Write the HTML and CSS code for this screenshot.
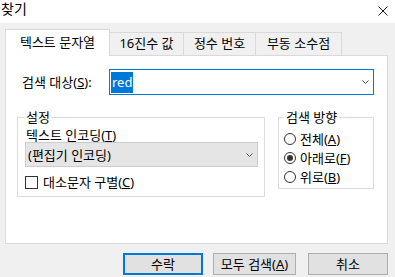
FILE: index.html
```html
<!DOCTYPE html>
<html lang="ko">

<head>
  <meta charset="UTF-8">
  <title>찾기</title>
  <link rel="stylesheet" href="styles.css">
</head>

<body>
  <div class="window">
    <div class="titlebar">
      <span class="title">찾기</span>
      <svg class="close" width="10" height="10" viewBox="0 0 10 10">
        <path d="M0.5 0.5 L9.5 9.5 M9.5 0.5 L0.5 9.5" stroke="#1a1a1a" stroke-width="1" fill="none" />
      </svg>
    </div>

    <div class="client">
      <div class="tabs">
        <div class="tab active">텍스트 문자열</div>
        <div class="tab t2">16진수 값</div>
        <div class="tab t3">정수 번호</div>
        <div class="tab t4">부동 소수점</div>
      </div>

      <div class="panel">
        <div class="search-row">
          <span class="search-label">검색 대상(<u>S</u>):</span>
          <div class="combo focus">
            <span class="sel">red</span>
            <svg class="chev" width="7" height="4" viewBox="0 0 7 4">
              <path d="M0.5 0.5 L3.5 3.5 L6.5 0.5" stroke="#444" fill="none" />
            </svg>
          </div>
        </div>

        <div class="groups">
          <fieldset class="group settings">
            <legend>설정</legend>
            <div class="enc-label">텍스트 인코딩(<u>T</u>)</div>
            <div class="combo gray">
              <span class="val">(편집기 인코딩)</span>
              <svg class="chev" width="7" height="4" viewBox="0 0 7 4">
                <path d="M0.5 0.5 L3.5 3.5 L6.5 0.5" stroke="#555" fill="none" />
              </svg>
            </div>
            <div class="check"><span class="box"></span><span>대소문자 구별(<u>C</u>)</span></div>
          </fieldset>

          <fieldset class="group direction">
            <legend>검색 방향</legend>
            <div class="radio"><span class="circle"></span><span>전체(<u>A</u>)</span></div>
            <div class="radio"><span class="circle on"></span><span>아래로(<u>F</u>)</span></div>
            <div class="radio"><span class="circle"></span><span>위로(<u>B</u>)</span></div>
          </fieldset>
        </div>
      </div>

      <div class="buttons">
        <div class="btn default">수락</div>
        <div class="btn wide">모두 검색(<u>A</u>)</div>
        <div class="btn last">취소</div>
      </div>
    </div>
  </div>
</body>

</html>
```

FILE: styles.css
```css
body {
  margin: 0;
  font-family: "Noto Sans", "Noto Sans CJK KR", sans-serif;
  font-size: 13px;
  line-height: 16px;
  color: #000;
}

.window {
  width: 395px;
  height: 277px;
  background: #f0f0f0;
  overflow: hidden;
}

.titlebar {
  height: 23px;
  background: #fff;
  display: flex;
  align-items: center;
  justify-content: space-between;
  padding: 0 7px 0 1px;
}

.title {
  font-size: 14px;
  line-height: 18px;
  margin-top: -6px;
}

.close {
  margin-top: -2px;
}

.client {
  padding: 6px 7px 0 5px;
}

/* tab strip */
.tabs {
  display: flex;
  align-items: flex-end;
  height: 26px;
}

.tab {
  height: 23px;
  box-sizing: border-box;
  border: 1px solid #d9d9d9;
  border-bottom: none;
  border-left: none;
  background: #f0f0f0;
  text-align: center;
  line-height: 21px;
}

.tab.active {
  width: 105px;
  height: 27px;
  margin-bottom: -1px;
  border-left: 1px solid #d9d9d9;
  background: #fff;
  position: relative;
  z-index: 1;
  line-height: 24px;
}

.t2 { width: 74px; }
.t3 { width: 72px; }
.t4 { width: 86px; }

.panel {
  width: 383px;
  height: 189px;
  box-sizing: border-box;
  border: 1px solid #d9d9d9;
  background: #fff;
}

.search-row {
  display: flex;
  align-items: center;
  padding: 13px 13px 0 16px;
}

.search-label {
  width: 87px;
}

.combo {
  height: 26px;
  box-sizing: border-box;
  display: flex;
  align-items: center;
  justify-content: space-between;
  padding: 0 4px 0 1px;
}

.combo.focus {
  width: 265px;
  border: 1px solid #0078d7;
  background: #fff;
}

.sel {
  background: #0078d7;
  color: #fff;
  height: 21px;
  line-height: 21px;
  padding: 0 1px;
}

.combo.gray {
  width: 233px;
  height: 25px;
  border: 1px solid #cccccc;
  background: #e5e5e5;
  padding-left: 2px;
}

/* group boxes */
.groups {
  display: flex;
  align-items: flex-start;
  gap: 13px;
  padding: 15px 0 0 11px;
}

.group {
  margin: 0;
  box-sizing: border-box;
  border: 1px solid #dcdcdc;
  min-width: 0;
}

.group legend {
  padding: 0 2px;
  line-height: 14px;
}

.settings {
  width: 248px;
  height: 87px;
  padding: 0 6px 0 7px;
}

.settings legend {
  padding: 0 1px;
}

.enc-label {
  line-height: 13px;
  margin-top: 5px;
  padding-left: 1px;
}

.check {
  display: flex;
  align-items: center;
  margin-top: 7px;
  gap: 5px;
}

.box {
  width: 13px;
  height: 13px;
  box-sizing: border-box;
  border: 1px solid #333;
  background: #fff;
}

.direction {
  width: 96px;
  height: 79px;
  padding: 5px 0 0 5px;
}

.radio {
  display: flex;
  align-items: center;
  height: 19px;
  gap: 4px;
}

.circle {
  width: 12px;
  height: 12px;
  box-sizing: border-box;
  border: 1px solid #333;
  border-radius: 50%;
  background: #fff;
  position: relative;
}

.circle.on::after {
  content: "";
  position: absolute;
  left: 2px;
  top: 2px;
  width: 6px;
  height: 6px;
  border-radius: 50%;
  background: #333;
}

/* buttons */
.buttons {
  display: flex;
  justify-content: flex-end;
  margin-top: 9px;
}

.btn {
  width: 80px;
  height: 22px;
  box-sizing: border-box;
  border: 1px solid #adadad;
  background: #e1e1e1;
  text-align: center;
  line-height: 20px;
}

.btn.default {
  border: 2px solid #0078d7;
  line-height: 18px;
}

.btn.wide {
  width: 83px;
  margin-left: 10px;
}

.btn.last {
  margin-left: 12px;
}
```
